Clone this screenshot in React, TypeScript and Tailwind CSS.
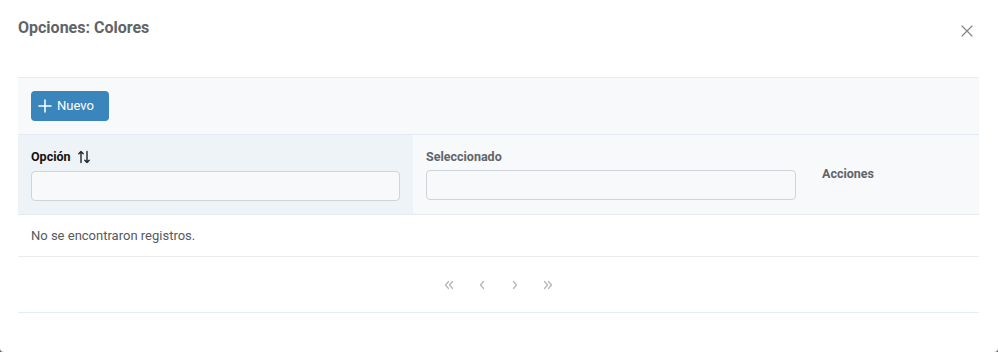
import React from "react";

const SortIcon = () => (
    <svg width="14" height="14" viewBox="0 0 14 14" fill="none" stroke="#212529" strokeWidth="1.4" strokeLinecap="round" strokeLinejoin="round">
        <path d="M4 12.5V1.5M1.8 3.7L4 1.5l2.2 2.2" />
        <path d="M10 1.5v11M7.8 10.3L10 12.5l2.2-2.2" />
    </svg>
);

const Chevron = ({ dir, double }: { dir: "l" | "r"; double?: boolean }) => (
    <svg width="12" height="12" viewBox="0 0 12 12" fill="none" stroke="#b3b8bd" strokeWidth="1.3" strokeLinecap="round" strokeLinejoin="round">
        {dir === "l" ? (
            double ? (
                <>
                    <path d="M5.5 2.5L2.5 6l3 3.5" />
                    <path d="M9.5 2.5L6.5 6l3 3.5" />
                </>
            ) : (
                <path d="M7.5 2.5L4.5 6l3 3.5" />
            )
        ) : double ? (
            <>
                <path d="M2.5 2.5L5.5 6l-3 3.5" />
                <path d="M6.5 2.5L9.5 6l-3 3.5" />
            </>
        ) : (
            <path d="M4.5 2.5L7.5 6l-3 3.5" />
        )}
    </svg>
);

export default function App() {
    return (
        <div className="w-[998px] h-[352px] bg-[#6b6b6b]" style={{ fontFamily: "Roboto, 'Liberation Sans', sans-serif" }}>
            <div className="w-full h-full bg-white rounded-b-[4px] flex flex-col">
                {/* header */}
                <div className="flex items-start justify-between pl-[18px] pr-[24px] pt-[18px] h-[77px]">
                    <h2 className="text-[16px] font-bold text-[#5f6469] leading-[20px]">Opciones: Colores</h2>
                    <button className="mt-[6px] text-[#80868b]">
                        <svg width="14" height="14" viewBox="0 0 14 14" stroke="currentColor" strokeWidth="1.2" strokeLinecap="round">
                            <path d="M2 2l10 10M12 2L2 12" />
                        </svg>
                    </button>
                </div>

                <div className="mx-[18px] mr-[19px]">
                    {/* toolbar */}
                    <div className="h-[57px] bg-[#f8f9fa] border-t border-[#e8edf2] flex items-center px-[13px]">
                        <button className="h-[30px] w-[78px] rounded-[4px] bg-[#3b85bd] text-white text-[13px] flex items-center pl-[7px] gap-[5px]">
                            <svg width="14" height="14" viewBox="0 0 14 14" stroke="white" strokeWidth="1.5" strokeLinecap="round">
                                <path d="M7 1v12M1 7h12" />
                            </svg>
                            Nuevo
                        </button>
                    </div>

                    {/* table header */}
                    <div className="flex h-[81px] border-t border-b border-[#e3eaf2] bg-[#f8f9fa]">
                        <div className="w-[395px] bg-[#eef3f8] px-[13px] pt-[14px]">
                            <div className="flex items-center gap-[6px] text-[12.5px] font-bold text-[#111] h-[16px]">
                                Opción <SortIcon />
                            </div>
                            <div className="mt-[6px] h-[30px] border border-[#ced4da] rounded-[4px] bg-[#f8f9fa]" />
                        </div>
                        <div className="w-[396px] px-[13px] pt-[14px]">
                            <div className="text-[12.5px] font-bold text-[#60656a] h-[16px] leading-[16px]">Seleccionado</div>
                            <div className="mt-[5px] h-[30px] border border-[#ced4da] rounded-[4px] bg-[#f8f9fa]" />
                        </div>
                        <div className="flex-1 px-[13px] flex items-center">
                            <div className="text-[12.5px] font-bold text-[#60656a]">Acciones</div>
                        </div>
                    </div>

                    {/* empty row */}
                    <div className="h-[42px] border-b border-[#e9ecef] flex items-center px-[13px] text-[13px] text-[#54595e]">
                        No se encontraron registros.
                    </div>

                    {/* paginator */}
                    <div className="h-[56px] border-b border-[#e6eef5] flex items-center justify-center">
                        <div className="w-[33px] flex justify-center"><Chevron dir="l" double /></div>
                        <div className="w-[33px] flex justify-center"><Chevron dir="l" /></div>
                        <div className="w-[33px] flex justify-center"><Chevron dir="r" /></div>
                        <div className="w-[33px] flex justify-center"><Chevron dir="r" double /></div>
                    </div>
                </div>
            </div>
        </div>
    );
}
